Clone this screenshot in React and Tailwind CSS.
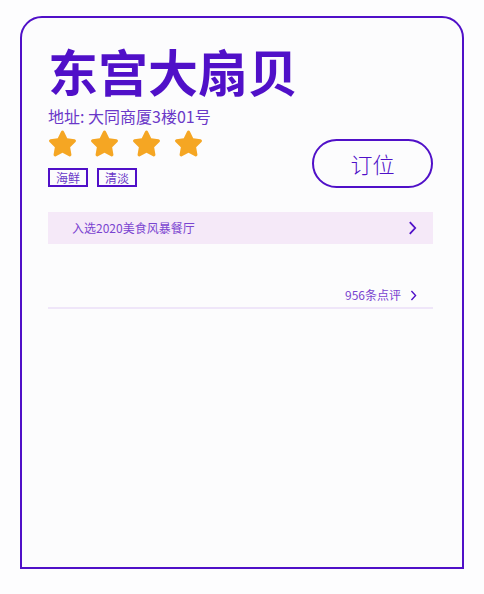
import { FaStar } from "react-icons/fa";

const font = { fontFamily: '"Noto Sans CJK SC", "Noto Sans", sans-serif' };

function Chevron({ className }) {
  return (
    <svg viewBox="0 0 10 16" className={className} fill="none" stroke="currentColor" strokeWidth="2">
      <path d="M2 1.5 L8 8 L2 14.5" />
    </svg>
  );
}

export default function App() {
  const tags = ["海鲜", "清淡"];

  return (
    <div className="w-[484px] h-[594px] bg-[#fdfdfe] pt-4 pl-5" style={font}>
      <div className="w-[444px] h-[553px] bg-[#fcfcfd] border-2 border-[#5010c8] rounded-t-[22px] pl-[26px] pr-[29px] pt-[18px]">
        <div className="flex justify-between items-end">
          <div>
            <h1 className="text-[50px] leading-[68px] font-semibold text-[#5010c8]">东宫大扇贝</h1>
            <div className="text-[16px] leading-[20px] text-[#6a38c8] mt-[2px]">地址: 大同商厦3楼01号</div>
            <div className="flex gap-[13px] mt-[3px] text-[#f5a623]">
              {[0, 1, 2, 3].map((i) => (
                <FaStar key={i} className="w-[29px] h-[29px]" />
              ))}
            </div>
            <div className="flex gap-[9px] mt-[10px]">
              {tags.map((t) => (
                <span
                  key={t}
                  className="border-2 border-[#5010c8] text-[12px] leading-[15px] text-[#6a38c8] px-[6px]"
                >
                  {t}
                </span>
              ))}
            </div>
          </div>
          <button className="w-[121px] h-[49px] rounded-full border-2 border-[#5010c8] text-[22px] font-light text-[#5010c8] mb-[-1px]">
            订位
          </button>
        </div>

        <div className="mt-[25px] h-[32px] bg-[#f5e9f8] flex items-center justify-between pl-[24px] pr-[16px]">
          <span className="text-[12px] text-[#7a44d0]">入选2020美食风暴餐厅</span>
          <Chevron className="w-[9px] h-[16px] text-[#5010c8]" />
        </div>

        <div className="mt-[42px] flex justify-end items-center gap-[9px] pr-[16px] pb-[3px] border-b-2 border-[#efe6f9]">
          <span className="text-[12px] text-[#7a44d0]">956条点评</span>
          <Chevron className="w-[7px] h-[11px] text-[#5010c8]" />
        </div>
      </div>
    </div>
  );
}
